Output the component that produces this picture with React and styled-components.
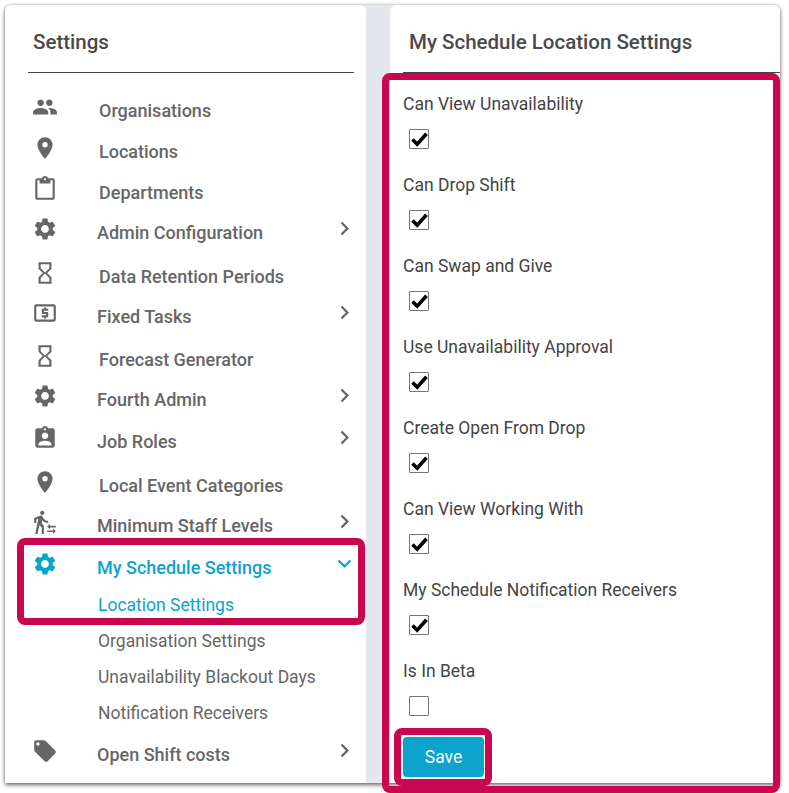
import React from 'react'
import styled, { createGlobalStyle } from 'styled-components'
import {
  MdPeople, MdLocationOn, MdContentPaste, MdSettings, MdHourglassEmpty, MdLocalAtm,
  MdAssignmentInd, MdTransferWithinAStation, MdLocalOffer, MdChevronRight, MdExpandMore,
} from 'react-icons/md'

const Global = createGlobalStyle`
  html, body { margin: 0; padding: 0; background: #fff; }
  body { font-family: Roboto, "Liberation Sans", sans-serif; overflow: hidden; }
`
const Page = styled.div`
  width: 789px;
  height: 793px;
  padding: 5px 9px 0 5px;
  box-sizing: border-box;
`
const Shell = styled.div`
  display: flex;
  justify-content: space-between;
  height: 778px;
  background: #e4e8ec;
  border-radius: 6px 6px 0 0;
  box-shadow: 0 2px 4px rgba(0, 0, 0, 0.55), 0 0 3px rgba(0, 0, 0, 0.25);
`
const Card = styled.section`
  width: ${p => p.$width}px;
  background: #fff;
  border-radius: 6px 6px 0 0;
  position: relative;
`
const SideHeader = styled.div`
  margin: 0 12px 0 23px;
  padding-left: 5px;
  border-bottom: 1px solid #444;
  height: 67px;
  display: flex;
  align-items: center;
`
const Title = styled.h2`
  margin: 6px 0 0;
  font-size: 20.5px;
  font-weight: 500;
  line-height: 24px;
  color: #4a4a4a;
`
const Menu = styled.nav`
  display: flex;
  flex-direction: column;
  padding-top: 19px;
`
const Row = styled.div`
  display: flex;
  align-items: center;
  height: 36px;
  margin-top: ${p => p.$gap || 0}px;
  padding: 0 8px 0 27px;
  color: ${p => (p.$active ? '#0ca3cc' : '#666')};
`
const IconSlot = styled.span`
  display: flex;
  justify-content: center;
  width: 26px;
  margin-bottom: 7px;
  font-size: 26px;
`
const Label = styled.span`
  flex: 1;
  margin-left: ${p => (p.$hasArrow ? 39 : 41)}px;
  font-size: 18px;
  font-weight: 500;
`
const Arrow = styled.span`
  display: flex;
  margin-bottom: 7px;
  font-size: 27px;
`
const SubItem = styled.div`
  height: 36px;
  margin-top: ${p => p.$gap || 0}px;
  padding-left: 93px;
  font-size: 17.5px;
  line-height: 36px;
  color: ${p => (p.$active ? '#0ca3cc' : '#666')};
`
const ActiveGroup = styled.div`
  position: relative;
`
const Callout = styled.div`
  position: absolute;
  top: ${p => p.$top}px;
  right: ${p => p.$right}px;
  bottom: ${p => p.$bottom}px;
  left: ${p => p.$left}px;
  border: 7px solid #c8074f;
  border-radius: 8px;
  pointer-events: none;
`
const MainHeader = styled.div`
  height: 67px;
  margin-left: 13px;
  padding-left: 6px;
  border-bottom: 1px solid #444;
  display: flex;
  align-items: center;
`
const Form = styled.div`
  position: relative;
  height: 710px;
  box-sizing: border-box;
  padding: 16px 13px 0;
`
const Field = styled.div`
  height: 81px;
`
const FieldLabel = styled.div`
  height: 28px;
  padding-top: 1px;
  box-sizing: border-box;
  font-size: 17.5px;
  line-height: 28px;
  color: #444;
`
const Check = styled.span`
  display: flex;
  align-items: center;
  justify-content: center;
  width: 20px;
  height: 20px;
  margin: 12px 0 0 6px;
  box-sizing: border-box;
  border: 1.5px solid #767676;
  border-radius: 1px;
  background: #fff;
`
const SaveButton = styled.button`
  position: relative;
  display: block;
  width: 81px;
  height: 40px;
  padding: 0;
  border: 0;
  border-radius: 4px;
  background: #0ca3cc;
  color: #fff;
  font-family: inherit;
  font-size: 17.5px;
`

const rows = [
  { icon: MdPeople, label: 'Organisations', gap: 0 },
  { icon: MdLocationOn, label: 'Locations', gap: 5 },
  { icon: MdContentPaste, label: 'Departments', gap: 5 },
  { icon: MdSettings, label: 'Admin Configuration', gap: 4, arrow: true },
  { icon: MdHourglassEmpty, label: 'Data Retention Periods', gap: 8 },
  { icon: MdLocalAtm, label: 'Fixed Tasks', gap: 4, arrow: true },
  { icon: MdHourglassEmpty, label: 'Forecast Generator', gap: 7 },
  { icon: MdSettings, label: 'Fourth Admin', gap: 4, arrow: true },
  { icon: MdAssignmentInd, label: 'Job Roles', gap: 6, arrow: true },
  { icon: MdLocationOn, label: 'Local Event Categories', gap: 8 },
  { icon: MdTransferWithinAStation, label: 'Minimum Staff Levels', gap: 4, arrow: true },
]

const fields = [
  ['Can View Unavailability', true],
  ['Can Drop Shift', true],
  ['Can Swap and Give', true],
  ['Use Unavailability Approval', true],
  ['Create Open From Drop', true],
  ['Can View Working With', true],
  ['My Schedule Notification Receivers', true],
  ['Is In Beta', false],
]

const MenuRow = ({ icon: Icon, label, gap, arrow, active, arrowIcon: ArrowIcon = MdChevronRight }) => (
  <Row $gap={gap} $active={active}>
    <IconSlot><Icon /></IconSlot>
    <Label $hasArrow={arrow}>{label}</Label>
    {arrow && <Arrow><ArrowIcon /></Arrow>}
  </Row>
)

const App = () => {
  return (
    <Page>
      <Global />
      <Shell>
        <Card $width={361}>
          <SideHeader><Title>Settings</Title></SideHeader>
          <Menu>
            {rows.map(r => <MenuRow key={r.label} {...r} />)}
            <ActiveGroup>
              <MenuRow icon={MdSettings} label="My Schedule Settings" gap={6} arrow active arrowIcon={MdExpandMore} />
              <SubItem $gap={2} $active>Location Settings</SubItem>
              <Callout $top={-5} $right={1} $bottom={-2} $left={12} />
            </ActiveGroup>
            <SubItem>Organisation Settings</SubItem>
            <SubItem>Unavailability Blackout Days</SubItem>
            <SubItem>Notification Receivers</SubItem>
            <MenuRow icon={MdLocalOffer} label="Open Shift costs" gap={5} arrow />
          </Menu>
        </Card>
        <Card $width={390}>
          <MainHeader><Title>My Schedule Location Settings</Title></MainHeader>
          <Form>
            {fields.map(([label, checked]) => (
              <Field key={label}>
                <FieldLabel>{label}</FieldLabel>
                <Check>
                  {checked && (
                    <svg width="17" height="15" viewBox="0 0 17 15">
                      <path d="M1.5 7.5 L6.2 12.2 L15.5 1.8" fill="none" stroke="#000" strokeWidth="3.6" />
                    </svg>
                  )}
                </Check>
              </Field>
            ))}
            <SaveButton>
              Save
              <Callout $top={-9} $right={-8} $bottom={-9} $left={-9} />
            </SaveButton>
            <Callout $top={0} $right={0} $bottom={-10} $left={-8} />
          </Form>
        </Card>
      </Shell>
    </Page>
  )
}

export default App
